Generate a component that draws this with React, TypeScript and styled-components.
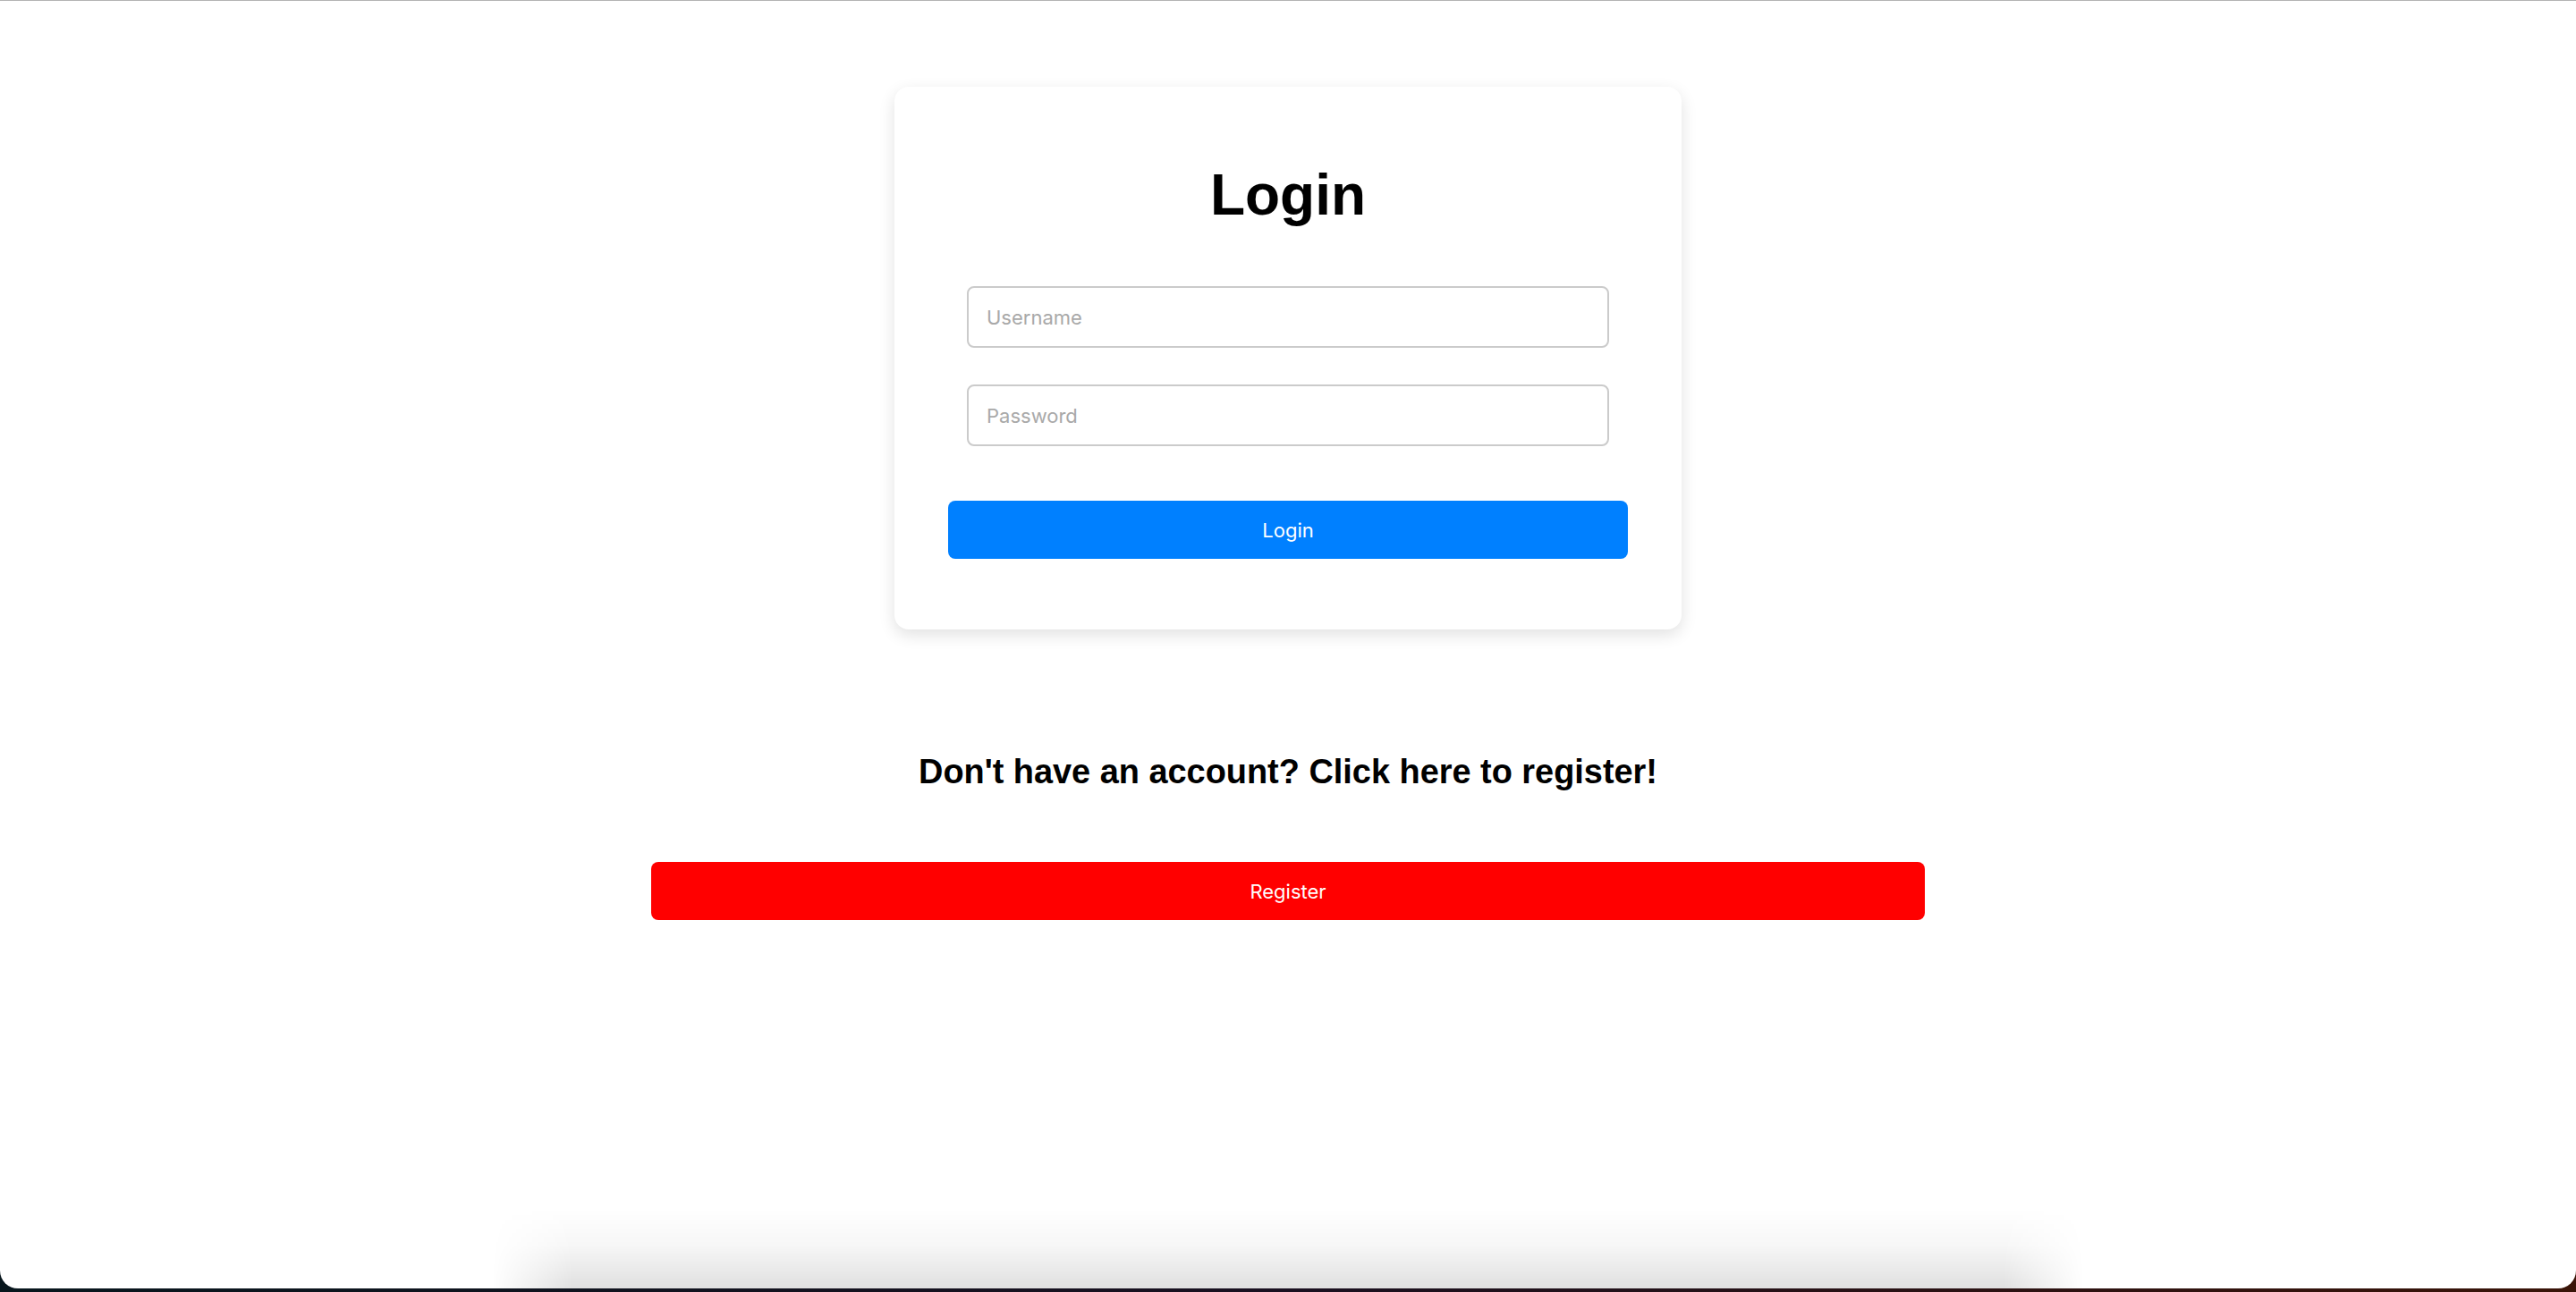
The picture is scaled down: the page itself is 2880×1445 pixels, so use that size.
import React from "react";
import styled, {createGlobalStyle} from "styled-components";

const GlobalStyle = createGlobalStyle`
    html, body {
        margin: 0;
        padding: 0;
        background: #0a1419;
    }
    * {
        box-sizing: border-box;
    }
`;

const Screen = styled.div`
    height: 1445px;
    background: linear-gradient(to right, #08161d, #1a1020 50%, #3a1408);
    overflow: hidden;
`;

const Window = styled.div`
    position: relative;
    height: 1441px;
    background: #fff;
    border-top: 1px solid #b4b4b4;
    border-radius: 0 0 20px 20px;
    overflow: hidden;
`;

const Page = styled.main`
    display: flex;
    flex-direction: column;
    align-items: center;
    padding-top: 96px;
    font-family: "Liberation Sans", Arial, sans-serif;
`;

const Card = styled.div`
    width: 880px;
    padding: 40px 60px 79px;
    background: #fff;
    border-radius: 16px;
    box-shadow: 0 6px 18px rgba(0, 0, 0, 0.12);
    display: flex;
    flex-direction: column;
    align-items: center;
`;

const Title = styled.h1`
    margin: 44px 0 65px;
    font-size: 64px;
    line-height: 74px;
    font-weight: 700;
    color: #000;
`;

const Form = styled.form`
    width: 100%;
    display: flex;
    flex-direction: column;
    align-items: center;
`;

const Input = styled.input`
    width: 718px;
    height: 69px;
    margin-bottom: 41px;
    padding: 0 20px;
    border: 2px solid #cbcbcb;
    border-radius: 8px;
    font-family: Inter, "Noto Sans", sans-serif;
    font-size: 22px;
    color: #222;
    background: #fff;
    outline: none;

    &::placeholder {
        color: #a9a9a9;
    }

    &:last-of-type {
        margin-bottom: 61px;
    }
`;

const Button = styled.button<{ $color: string; $width: number }>`
    width: ${p => p.$width}px;
    height: 65px;
    border: none;
    border-radius: 8px;
    background: ${p => p.$color};
    color: #fff;
    font-family: Inter, "Noto Sans", sans-serif;
    font-size: 22px;
    cursor: pointer;
`;

const Prompt = styled.h3`
    margin: 138px 0 79px;
    font-size: 37.9px;
    line-height: 43px;
    font-weight: 700;
    color: #000;
`;

// soft shadow of something sitting just below the window's bottom edge
const DockShadow = styled.div`
    position: absolute;
    left: 550px;
    right: 550px;
    bottom: 0;
    height: 90px;
    background: linear-gradient(to bottom, rgba(0, 0, 0, 0), rgba(0, 0, 0, 0.03) 45%, rgba(0, 0, 0, 0.12));
    -webkit-mask-image: linear-gradient(to right, transparent, #000 90px, #000 calc(100% - 90px), transparent);
    mask-image: linear-gradient(to right, transparent, #000 90px, #000 calc(100% - 90px), transparent);
    pointer-events: none;
`;

const App = () => {
    return (
        <Screen>
            <GlobalStyle/>
            <Window>
                <Page>
                    <Card>
                        <Title>Login</Title>
                        <Form onSubmit={e => e.preventDefault()}>
                            <Input type="text" placeholder="Username"/>
                            <Input type="password" placeholder="Password"/>
                            <Button type="submit" $color="#0080ff" $width={760}>Login</Button>
                        </Form>
                    </Card>
                    <Prompt>Don't have an account? Click here to register!</Prompt>
                    <Button type="button" $color="#ff0000" $width={1424}>Register</Button>
                </Page>
                <DockShadow/>
            </Window>
        </Screen>
    );
};

export default App;
